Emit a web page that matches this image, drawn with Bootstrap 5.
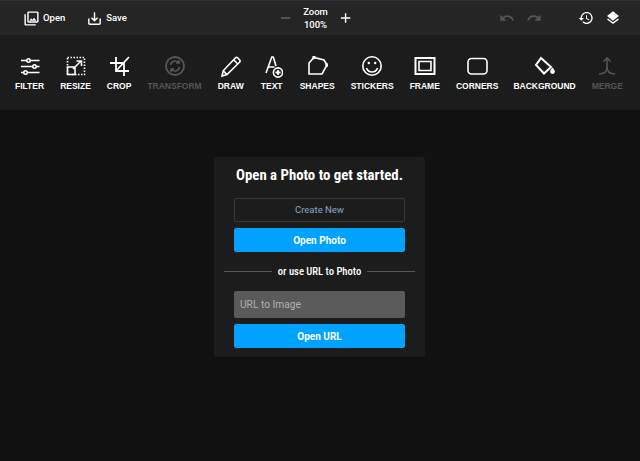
<!doctype html>
<html lang="en">
<head>
  <meta charset="utf-8" />
  <meta name="viewport" content="width=device-width, initial-scale=1" />
  <title>Photo Editor</title>
  <link href="https://cdn.jsdelivr.net/npm/bootstrap@5.3.5/dist/css/bootstrap.min.css" rel="stylesheet" />
  <style>
    html, body { height: 100%; }
    body {
      background-color: #111;
      color: #fff;
      font-family: Roboto, "Liberation Sans", sans-serif;
      overflow: hidden;
    }
    .top-bar {
      height: 35px;
      background-color: #252525;
      border-top: 1px solid #303030;
      padding: 0 19px 0 23px;
    }
    .top-btn {
      font-size: 9.5px;
      font-weight: 500;
      color: #fff;
      gap: 3px;
    }
    .top-btn svg { width: 17px; height: 17px; fill: #fff; }
    .hist-icon { width: 16px; height: 16px; fill: #fff; }
    .top-left { gap: 21px; width: 256px; }
    .zoom-box { gap: 11px; width: 73px; }
    .zoom-text { font-size: 9.5px; font-weight: 500; line-height: 13px; text-align: center; }
    .zoom-icon { width: 14px; height: 14px; stroke: #fff; stroke-width: 1.5; fill: none; }
    .zoom-icon.off { stroke: #666; }
    .undo-icon { width: 16px; height: 16px; fill: #555; }
    .top-right { width: 122px; }
    .undo-group { gap: 11px; }
    .hist-group { gap: 11px; }
    .tool-bar {
      height: 75px;
      background-color: #1c1c1c;
      padding: 21px 0 0 15px;
      gap: 16px;
    }
    .tool-item {
      font-family: "Liberation Sans", Arial, sans-serif;
      font-size: 8.5px;
      font-weight: 700;
      color: #fff;
      line-height: 10px;
    }
    .tool-item svg { width: 22px; height: 22px; margin-bottom: 3px; fill: none; stroke: #fff; stroke-width: 1.6; }
    .tool-item.off { color: #555; }
    .tool-item.off svg { stroke: #555; }
    .tool-item.push-r { margin-left: 1px; }
    .tool-item.push-l { margin-left: -1px; }
    .start-area { padding: 47px 1px 0 0; }
    .start-card {
      width: 211px;
      height: 200px;
      background-color: #1c1c1c;
      border: 0;
      border-radius: 3px;
      padding: 9px 20px 0;
    }
    .start-title {
      font-size: 14.8px;
      font-weight: 700;
      font-stretch: 75%;
      color: #fff;
      line-height: 19px;
      margin: 0 0 13px;
      white-space: nowrap;
      text-align: center;
    }
    .btn.btn-create, .btn.btn-open {
      font-size: 10px;
      line-height: 12px;
      padding: 5px;
      height: 24px;
      border-radius: 2px;
    }
    .btn.btn-create { font-size: 9.5px; color: #8ba3c0; border: 1px solid #383838; background: transparent; font-weight: 400; margin-bottom: 6px; }
    .btn.btn-open { background-color: #00a2ff; border: 1px solid #00a2ff; color: #fff; font-weight: 700; padding-top: 6px; }
    .or-row { margin: 12px -10px 12px; gap: 6px; font-size: 10.6px; font-stretch: 75%; font-weight: 500; line-height: 15px; white-space: nowrap; }
    .or-row i { flex: 1; height: 1px; background-color: #555; }
    .form-control.url-input {
      height: 27px;
      padding: 0 6px;
      font-size: 10.2px;
      color: #fff;
      background-color: #5a5a5a;
      border: 0;
      border-radius: 2px;
      margin-bottom: 6px;
    }
    .url-input::placeholder { color: #b0b0b0; opacity: 1; }
  </style>
</head>
<body>

  <div class="top-bar d-flex align-items-center">
    <div class="top-left d-flex align-items-center">
      <div class="top-btn d-flex align-items-center">
        <svg viewBox="0 0 24 24"><path d="M20 4v12H8V4h12m0-2H8c-1.100 0-2 .9-2 2v12c0 1.100.9 2 2 2h12c1.100 0 2-.9 2-2V4c0-1.100-.9-2-2-2zm-8.500 9.670l1.690 2.260 2.480-3.100L19 15H9zM2 6v14c0 1.100.9 2 2 2h14v-2H4V6H2z"/></svg>
        Open
      </div>
      <div class="top-btn d-flex align-items-center">
        <svg viewBox="0 0 24 24"><path d="M19 12v7H5v-7H3v7c0 1.100.9 2 2 2h14c1.100 0 2-.9 2-2v-7h-2zm-6 .670l2.590-2.580L17 11.500l-5 5-5-5 1.410-1.410L11 12.670V3h2z"/></svg>
        Save
      </div>
    </div>
    <div class="zoom-box d-flex align-items-center">
      <svg class="zoom-icon off" viewBox="0 0 14 14"><path d="M2 7h10"/></svg>
      <div class="zoom-text">Zoom<br />100%</div>
      <svg class="zoom-icon" viewBox="0 0 14 14"><path d="M2 7h10M7 2v10"/></svg>
    </div>
    <div class="top-right d-flex align-items-center justify-content-between ms-auto">
      <div class="undo-group d-flex">
        <svg class="undo-icon" viewBox="0 0 24 24"><path d="M12.500 8c-2.650 0-5.050.99-6.900 2.600L2 7v9h9l-3.620-3.620c1.390-1.160 3.160-1.880 5.120-1.880 3.540 0 6.550 2.310 7.600 5.500l2.370-.78C21.080 11.030 17.150 8 12.500 8z"/></svg>
        <svg class="undo-icon" viewBox="0 0 24 24"><path d="M18.400 10.600C16.550 8.990 14.150 8 11.500 8c-4.650 0-8.580 3.030-9.960 7.220L3.900 16c1.050-3.190 4.050-5.500 7.600-5.500 1.950 0 3.730.72 5.120 1.880L13 16h9V7l-3.600 3.600z"/></svg>
      </div>
      <div class="hist-group d-flex">
        <svg class="hist-icon" viewBox="0 0 24 24"><path d="M13 3c-4.970 0-9 4.030-9 9H1l3.890 3.890.07.14L9 12H6c0-3.870 3.130-7 7-7s7 3.130 7 7-3.130 7-7 7c-1.930 0-3.680-.79-4.940-2.060l-1.420 1.420C8.270 19.990 10.510 21 13 21c4.970 0 9-4.030 9-9s-4.030-9-9-9zm-1 5v5l4.280 2.540.72-1.210-3.500-2.080V8H12z"/></svg>
        <svg class="hist-icon" viewBox="0 0 24 24"><path d="M11.990 18.540l-7.370-5.730L3 14.070l9 7 9-7-1.630-1.270-7.380 5.740zM12 16l7.360-5.730L21 9l-9-7-9 7 1.630 1.270L12 16z"/></svg>
      </div>
    </div>
  </div>

  <div class="tool-bar d-flex">
    <div class="tool-item d-flex flex-column align-items-center">
      <svg viewBox="0 0 22 22"><path d="M2 4.500h18.500M2 10.500h18.500M2 16.500h18.500"/><circle cx="9.500" cy="4.500" r="1.700" fill="#1c1c1c"/><circle cx="15.500" cy="10.500" r="1.700" fill="#1c1c1c"/><circle cx="6.500" cy="16.500" r="1.700" fill="#1c1c1c"/></svg>
      FILTER
    </div>
    <div class="tool-item d-flex flex-column align-items-center">
      <svg viewBox="0 0 22 22"><path d="M3.500 1.500h17v17h-17z" stroke-dasharray="1.500 1.500"/><path d="M3.500 11h7.500v7.500H3.500zM9 13l8-8M12.500 5h5v5" /></svg>
      RESIZE
    </div>
    <div class="tool-item d-flex flex-column align-items-center">
      <svg viewBox="0 0 22 22"><path d="M8 1v14h13M2 7h14v13M8 15L21 1" stroke-width="1.800"/></svg>
      CROP
    </div>
    <div class="tool-item off d-flex flex-column align-items-center">
      <svg viewBox="0 0 22 22"><circle cx="11" cy="10" r="9" stroke-width="1.900"/><path d="M6.500 9a4.700 4.700 0 0 1 8-2.500M15.500 11a4.700 4.700 0 0 1-8 2.500M15 4v3h-3M7 16v-3h3"/></svg>
      TRANSFORM
    </div>
    <div class="tool-item d-flex flex-column align-items-center">
      <svg viewBox="0 0 22 22"><path d="M2 20l1.200-5.200L15.300 2a1.800 1.800 0 0 1 2.500 0l1.700 1.700a1.800 1.800 0 0 1 0 2.500L7 18.600zM3.200 14.800L7 18.600M13.600 3.800l4 4"/></svg>
      DRAW
    </div>
    <div class="tool-item push-r d-flex flex-column align-items-center">
      <svg viewBox="0 0 22 22"><path d="M5 17L10.800 1h1.500L15 10M7 11h6.500"/><circle cx="17" cy="16.500" r="4.600"/><path d="M14.500 16.500h5M17 14v5" stroke-width="1.800"/></svg>
      TEXT
    </div>
    <div class="tool-item push-r d-flex flex-column align-items-center">
      <svg viewBox="0 0 22 22"><path d="M3 7L8 1.500 18 4l3 5-5 9H3z"/><circle cx="8" cy="1.500" r="1" fill="#fff"/><circle cx="21" cy="9" r="1" fill="#fff"/></svg>
      SHAPES
    </div>
    <div class="tool-item d-flex flex-column align-items-center">
      <svg viewBox="0 0 22 22"><circle cx="11" cy="10" r="9.200"/><path d="M5.500 12a5.800 5.800 0 0 0 11 0"/><circle cx="7.800" cy="7" r="1.200" fill="#fff" stroke="none"/><circle cx="14.200" cy="7" r="1.200" fill="#fff" stroke="none"/></svg>
      STICKERS
    </div>
    <div class="tool-item d-flex flex-column align-items-center">
      <svg viewBox="0 0 22 22"><path d="M1.500 2h19v16h-19z" stroke-width="2"/><path d="M5 5.500h12v9H5z"/></svg>
      FRAME
    </div>
    <div class="tool-item d-flex flex-column align-items-center">
      <svg viewBox="0 0 22 22"><rect x="2" y="2.500" width="19" height="15.500" rx="3.500"/></svg>
      CORNERS
    </div>
    <div class="tool-item push-l d-flex flex-column align-items-center">
      <svg viewBox="0 0 22 22"><path d="M7 2l10 9-7 6.500L2 9z" stroke-width="2"/><path d="M18.500 11.500c1.600 2 2.400 3 2.400 4a2.400 2.400 0 0 1-4.800 0c0-1 .8-2 2.400-4z" fill="#fff" stroke="none"/></svg>
      BACKGROUND
    </div>
    <div class="tool-item off d-flex flex-column align-items-center">
      <svg viewBox="0 0 22 22"><path d="M11 2v9c0 5-3 7-8 7M11 11c0 5 3 7 8 7M7.500 5.500L11 2l3.500 3.500"/></svg>
      MERGE
    </div>
  </div>

  <div class="start-area d-flex justify-content-center">
    <div class="start-card card">
      <h1 class="start-title">Open a Photo to get started.</h1>
      <button type="button" class="btn btn-create w-100">Create New</button>
      <button type="button" class="btn btn-open w-100">Open Photo</button>
      <div class="or-row d-flex align-items-center"><i></i><span>or use URL to Photo</span><i></i></div>
      <input type="text" class="form-control url-input" placeholder="URL to Image" />
      <button type="button" class="btn btn-open w-100">Open URL</button>
    </div>
  </div>

  <script src="https://cdn.jsdelivr.net/npm/bootstrap@5.3.5/dist/js/bootstrap.bundle.min.js"></script>
</body>
</html>
